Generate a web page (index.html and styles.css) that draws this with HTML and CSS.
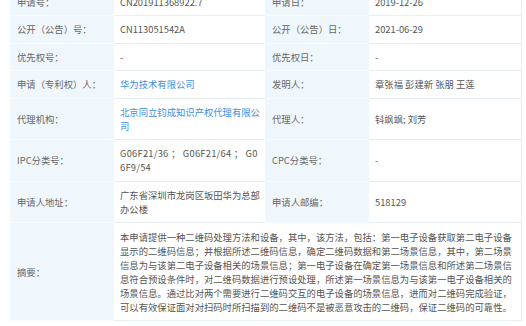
FILE: index.html
```html
<!DOCTYPE html>
<html lang="zh-CN">
<head>
<meta charset="utf-8">
<title>专利信息</title>
<link rel="stylesheet" href="styles.css">
</head>
<body>
<div class="page">
  <table class="info">
    <colgroup>
      <col class="c-label">
      <col class="c-value">
      <col class="c-label2">
      <col class="c-value2">
    </colgroup>
    <tbody>
      <tr>
        <th>申请号：</th><td>CN201911368922.7</td>
        <th>申请日：</th><td>2019-12-26</td>
      </tr>
      <tr>
        <th>公开（公告）号：</th><td>CN113051542A</td>
        <th>公开（公告）日：</th><td>2021-06-29</td>
      </tr>
      <tr>
        <th>优先权号：</th><td>-</td>
        <th>优先权日：</th><td>-</td>
      </tr>
      <tr>
        <th>申请（专利权）人：</th><td><a class="link" href="#">华为技术有限公司</a></td>
        <th>发明人：</th><td>章张福 彭建新 张朋 王莲</td>
      </tr>
      <tr>
        <th>代理机构：</th><td><a class="link" href="#">北京同立钧成知识产权代理有限公司</a></td>
        <th>代理人：</th><td>钭飒飒; 刘芳</td>
      </tr>
      <tr>
        <th>IPC分类号：</th><td class="ipc">G06F21/36 ； G06F21/64 ； G06F9/54</td>
        <th>CPC分类号：</th><td>-</td>
      </tr>
      <tr>
        <th>申请人地址：</th><td>广东省深圳市龙岗区坂田华为总部办公楼</td>
        <th>申请人邮编：</th><td>518129</td>
      </tr>
      <tr>
        <th>摘要：</th>
        <td colspan="3" class="abstract">本申请提供一种二维码处理方法和设备，其中，该方法，包括：第一电子设备获取第二电子设备显示的二维码信息；并根据所述二维码信息，确定二维码数据和第二场景信息，其中，第二场景信息为与该第二电子设备相关的场景信息；第一电子设备在确定第一场景信息和所述第二场景信息符合预设条件时，对二维码数据进行预设处理，所述第一场景信息为与该第一电子设备相关的场景信息。通过比对两个需要进行二维码交互的电子设备的场景信息，进而对二维码完成验证，可以有效保证面对对扫码时所扫描到的二维码不是被恶意攻击的二维码，保证二维码的可靠性。</td>
      </tr>
    </tbody>
  </table>
</div>
</body>
</html>
```
FILE: styles.css
```css
html, body {
  margin: 0;
  padding: 0;
  background: #ffffff;
}

.page {
  padding: 0 5px 0 10px;
  overflow: hidden;
  height: 326px;
}

.info {
  margin-top: -11.5px;
  width: 511px;
  border-collapse: collapse;
  table-layout: fixed;
  font-family: "Noto Sans CJK SC", "Noto Sans", sans-serif;
  font-size: 9.33px;
  line-height: 14px;
  color: #555555;
  border-right: 1px solid #e6edf3;
}

.c-label { width: 104px; }
.c-value { width: 151px; }
.c-label2 { width: 104px; }
.c-value2 { width: 152px; }

.info th,
.info td {
  border-bottom: 1px solid #e6edf3;
  padding: 6.25px 4px 6.25px 6px;
  vertical-align: middle;
  text-align: left;
}

.info th {
  background: #eff6fc;
  font-weight: normal;
  color: #666666;
  padding-left: 7px;
  border-bottom-color: #f9fcfe;
}

.info td {
  background: #ffffff;
  word-break: break-all;
}

.info td.ipc {
  letter-spacing: 0.25px;
}

.info td.abstract {
  padding-top: 7px;
  padding-right: 8px;
}

.link {
  color: #3d8ee6;
  text-decoration: none;
}
```
